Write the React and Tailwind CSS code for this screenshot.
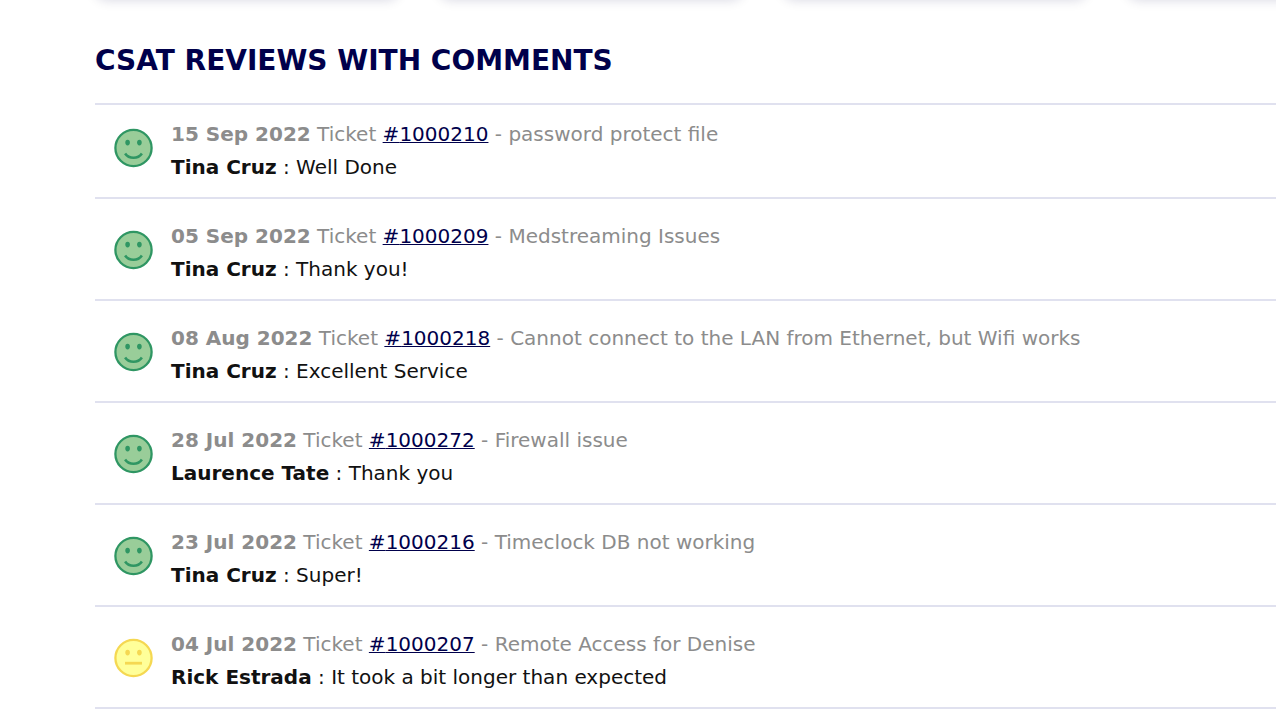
const reviews = [
    { date: "15 Sep 2022", ticket: "1000210", subject: "password protect file", name: "Tina Cruz", comment: "Well Done", rating: "good" },
    { date: "05 Sep 2022", ticket: "1000209", subject: "Medstreaming Issues", name: "Tina Cruz", comment: "Thank you!", rating: "good" },
    { date: "08 Aug 2022", ticket: "1000218", subject: "Cannot connect to the LAN from Ethernet, but Wifi works", name: "Tina Cruz", comment: "Excellent Service", rating: "good" },
    { date: "28 Jul 2022", ticket: "1000272", subject: "Firewall issue", name: "Laurence Tate", comment: "Thank you", rating: "good" },
    { date: "23 Jul 2022", ticket: "1000216", subject: "Timeclock DB not working", name: "Tina Cruz", comment: "Super!", rating: "good" },
    { date: "04 Jul 2022", ticket: "1000207", subject: "Remote Access for Denise", name: "Rick Estrada", comment: "It took a bit longer than expected", rating: "neutral" },
];

function Face({ rating }) {
    const good = rating === "good";
    const stroke = good ? "#2f9663" : "#f5d852";
    const fill = good ? "#99cd99" : "#ffff99";

    return (
        <svg className="mt-2.5 size-[41px] shrink-0" viewBox="0 0 41 41" fill="none" aria-hidden="true">
            <circle cx="20.5" cy="20" r="18.1" fill={fill} stroke={stroke} strokeWidth="2.3" />
            <ellipse cx="14.6" cy="14.6" rx="2.3" ry="2.8" fill={stroke} />
            <ellipse cx="26.4" cy="14.6" rx="2.3" ry="2.8" fill={stroke} />
            {good ? (
                <path d="M12.1 25.4C16 31.2 25 31.2 28.9 25.4" stroke={stroke} strokeWidth="2.6" />
            ) : (
                <path d="M12 25.2H29" stroke={stroke} strokeWidth="2.8" />
            )}
        </svg>
    );
}

export default function App() {
    return (
        <div className="overflow-hidden bg-white pl-[95px] font-['DejaVu_Sans',sans-serif] text-xl text-[#111]">
            {/* lower edge of the summary cards */}
            <div className="-mt-10 flex gap-10">
                {[0, 1, 2, 3].map((i) => (
                    <div key={i} className="h-10 w-[304px] shrink-0 rounded-xl bg-white shadow-[0_0_12px_rgba(0,0,75,0.16)]" />
                ))}
            </div>

            <h1 className="pt-[41px] pb-[22px] text-[28px] leading-10 font-bold text-[#00004b]">CSAT REVIEWS WITH COMMENTS</h1>

            <ul className="border-t-2 border-[#e0e1ef]">
                {reviews.map((review) => (
                    <li key={review.ticket} className="flex items-start gap-[17px] border-b-2 border-[#e0e1ef] pt-[21px] pb-[13px] pl-[18px] first:pt-[13px]">
                        <Face rating={review.rating} />
                        <div className="leading-[33px]">
                            <p className="text-[#8c8c8c]">
                                <strong>{review.date}</strong> Ticket{" "}
                                <a href={`#${review.ticket}`} className="text-[#00004b] underline decoration-1">#{review.ticket}</a> - {review.subject}
                            </p>
                            <p>
                                <strong>{review.name}</strong> : {review.comment}
                            </p>
                        </div>
                    </li>
                ))}
            </ul>
        </div>
    );
}
